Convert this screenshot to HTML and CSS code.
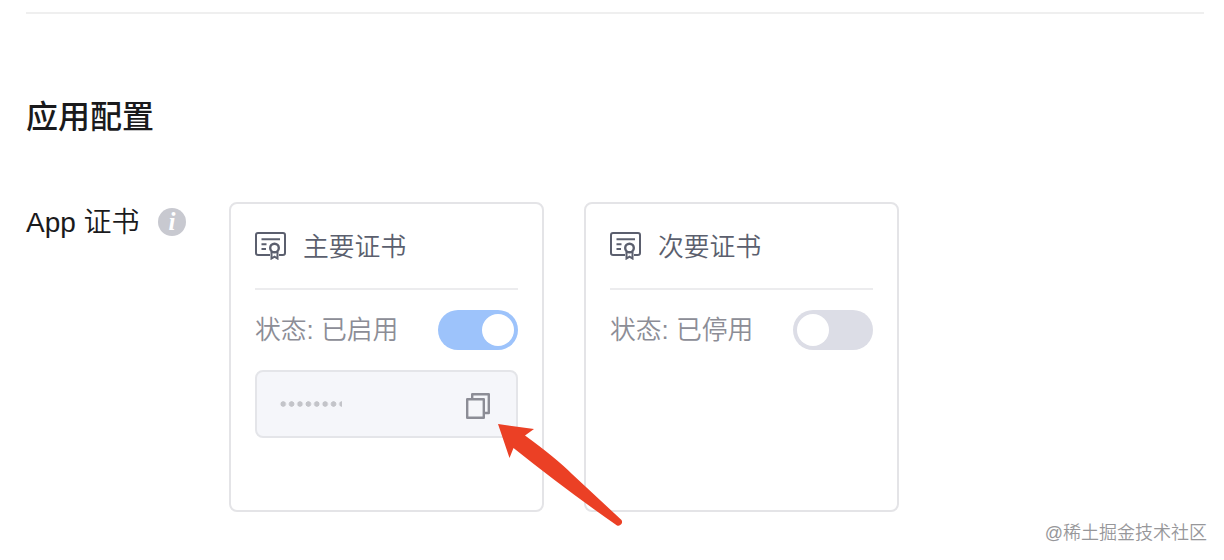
FILE: index.html
```html
<!DOCTYPE html>
<html lang="zh-CN">
<head>
  <meta charset="UTF-8" />
  <meta name="viewport" content="width=device-width, initial-scale=1.0" />
  <title>应用配置</title>
  <link rel="stylesheet" href="styles.css">
</head>
<body>
  <div class="page">
    <h2 class="section-title">应用配置</h2>

    <div class="form-row">
      <div class="form-label">
        <span class="label-text">App 证书</span>
        <span class="info-icon"><i>i</i></span>
      </div>

      <div class="cards">
        <div class="card">
          <div class="card-header">
            <svg class="cert-icon" viewBox="0 0 32 28" fill="none" stroke="#5b5f6e" stroke-width="2">
              <path d="M15 23H3a2 2 0 0 1-2-2V3a2 2 0 0 1 2-2h25a2 2 0 0 1 2 2v18a2 2 0 0 1-2 2h-4" />
              <path d="M6.5 7.2H25M6.5 12.2h5M6.5 17H11" />
              <circle cx="19.5" cy="16" r="4.3" stroke-width="2.4" />
              <path d="M16.5 20v6.5l3-1.8 3 1.8V20" />
            </svg>
            <span class="card-title">主要证书</span>
          </div>
          <div class="card-status">
            <span class="status-text">状态: 已启用</span>
            <span class="switch on"></span>
          </div>
          <div class="secret">
            <span class="dots"></span>
            <svg class="copy-icon" viewBox="0 0 26 28" fill="none" stroke="#8c8d96" stroke-width="2.4" stroke-linejoin="round">
              <path d="M7.2 7V2.2h16.6V21H19" />
              <path d="M2.2 7.2h16.6v18.6H2.2z" />
            </svg>
            <svg class="arrow" viewBox="0 0 126 104">
              <path d="M0 0L36 5L27 11.5Q58 34 74 50L123.500 96A3.800 3.800 0 0 1 119 101.500Q68 66 15.500 24L11.500 34z" fill="#eb4025" />
            </svg>
          </div>
        </div>

        <div class="card">
          <div class="card-header">
            <svg class="cert-icon" viewBox="0 0 32 28" fill="none" stroke="#5b5f6e" stroke-width="2">
              <path d="M15 23H3a2 2 0 0 1-2-2V3a2 2 0 0 1 2-2h25a2 2 0 0 1 2 2v18a2 2 0 0 1-2 2h-4" />
              <path d="M6.5 7.2H25M6.5 12.2h5M6.5 17H11" />
              <circle cx="19.5" cy="16" r="4.3" stroke-width="2.4" />
              <path d="M16.5 20v6.5l3-1.8 3 1.8V20" />
            </svg>
            <span class="card-title">次要证书</span>
          </div>
          <div class="card-status">
            <span class="status-text">状态: 已停用</span>
            <span class="switch"></span>
          </div>
        </div>
      </div>
    </div>
  </div>
  <div class="watermark">@稀土掘金技术社区</div>
</body>
</html>
```

FILE: styles.css
```css
* {
  box-sizing: border-box;
}

body {
  margin: 0;
  height: 560px;
  overflow: hidden;
  background: #fff;
  color: #1a1a1c;
  font-family: "Liberation Sans", "Noto Sans CJK SC", sans-serif;
  font-weight: 350;
}

.page {
  margin: 12px 20px 0 26px;
  border-top: 2px solid #efefef;
}

.section-title {
  margin: 79px 0 61px;
  font-size: 32px;
  font-weight: 500;
  line-height: 48px;
}

.form-row {
  display: flex;
}

.form-label {
  display: flex;
  align-items: center;
  width: 203px;
  height: 40px;
  font-size: 28px;
}

.label-text {
  width: 132px;
  padding-bottom: 4px;
  white-space: nowrap;
}

.info-icon {
  width: 28px;
  height: 28px;
  border-radius: 50%;
  background: #c8c9d0;
  color: #fff;
  font: bold 25px/28px "Liberation Serif", serif;
  text-align: center;
}

.cards {
  display: flex;
  gap: 40px;
}

.card {
  width: 315px;
  height: 310px;
  padding: 0 24px;
  border: 2px solid #e4e4e7;
  border-radius: 8px;
}

.card-header {
  display: flex;
  align-items: center;
  height: 86px;
  border-bottom: 2px solid #ececee;
  color: #5b5f6e;
  font-size: 25.8px;
}

.card-title {
  padding-bottom: 3px;
}

.cert-icon {
  width: 32px;
  height: 28px;
  margin-right: 16px;
}

.card-status {
  display: flex;
  align-items: center;
  justify-content: space-between;
  height: 80px;
  color: #8c8d96;
  font-size: 25.8px;
}

.status-text {
  padding-bottom: 6px;
}

.switch {
  width: 80px;
  height: 40px;
  padding: 4px;
  border-radius: 20px;
  background: #dcdde6;
}

.switch::before {
  content: "";
  display: block;
  width: 32px;
  height: 32px;
  border-radius: 50%;
  background: #fff;
}

.switch.on {
  background: #9dc3fb;
}

.switch.on::before {
  margin-left: auto;
}

.secret {
  position: relative;
  display: flex;
  align-items: center;
  justify-content: space-between;
  height: 68px;
  padding: 0 25px 0 22px;
  border: 2px solid #e4e5e9;
  border-radius: 8px;
  background: #f5f6fa;
}

/* masked value, the last dot is clipped */
.dots {
  width: 63px;
  height: 6px;
  background: radial-gradient(circle at 4.2px 3px, #c3c4c9 2.4px, transparent 3.1px) 0 0 / 8.4px 6px repeat-x;
}

.copy-icon {
  width: 26px;
  height: 28px;
  margin-top: 3px;
}

.arrow {
  position: absolute;
  left: 241px;
  top: 52px;
  width: 126px;
  height: 104px;
  z-index: 1;
}

.watermark {
  position: absolute;
  right: 17px;
  bottom: 14px;
  color: #97979a;
  font-size: 18px;
  line-height: 26px;
}
```
